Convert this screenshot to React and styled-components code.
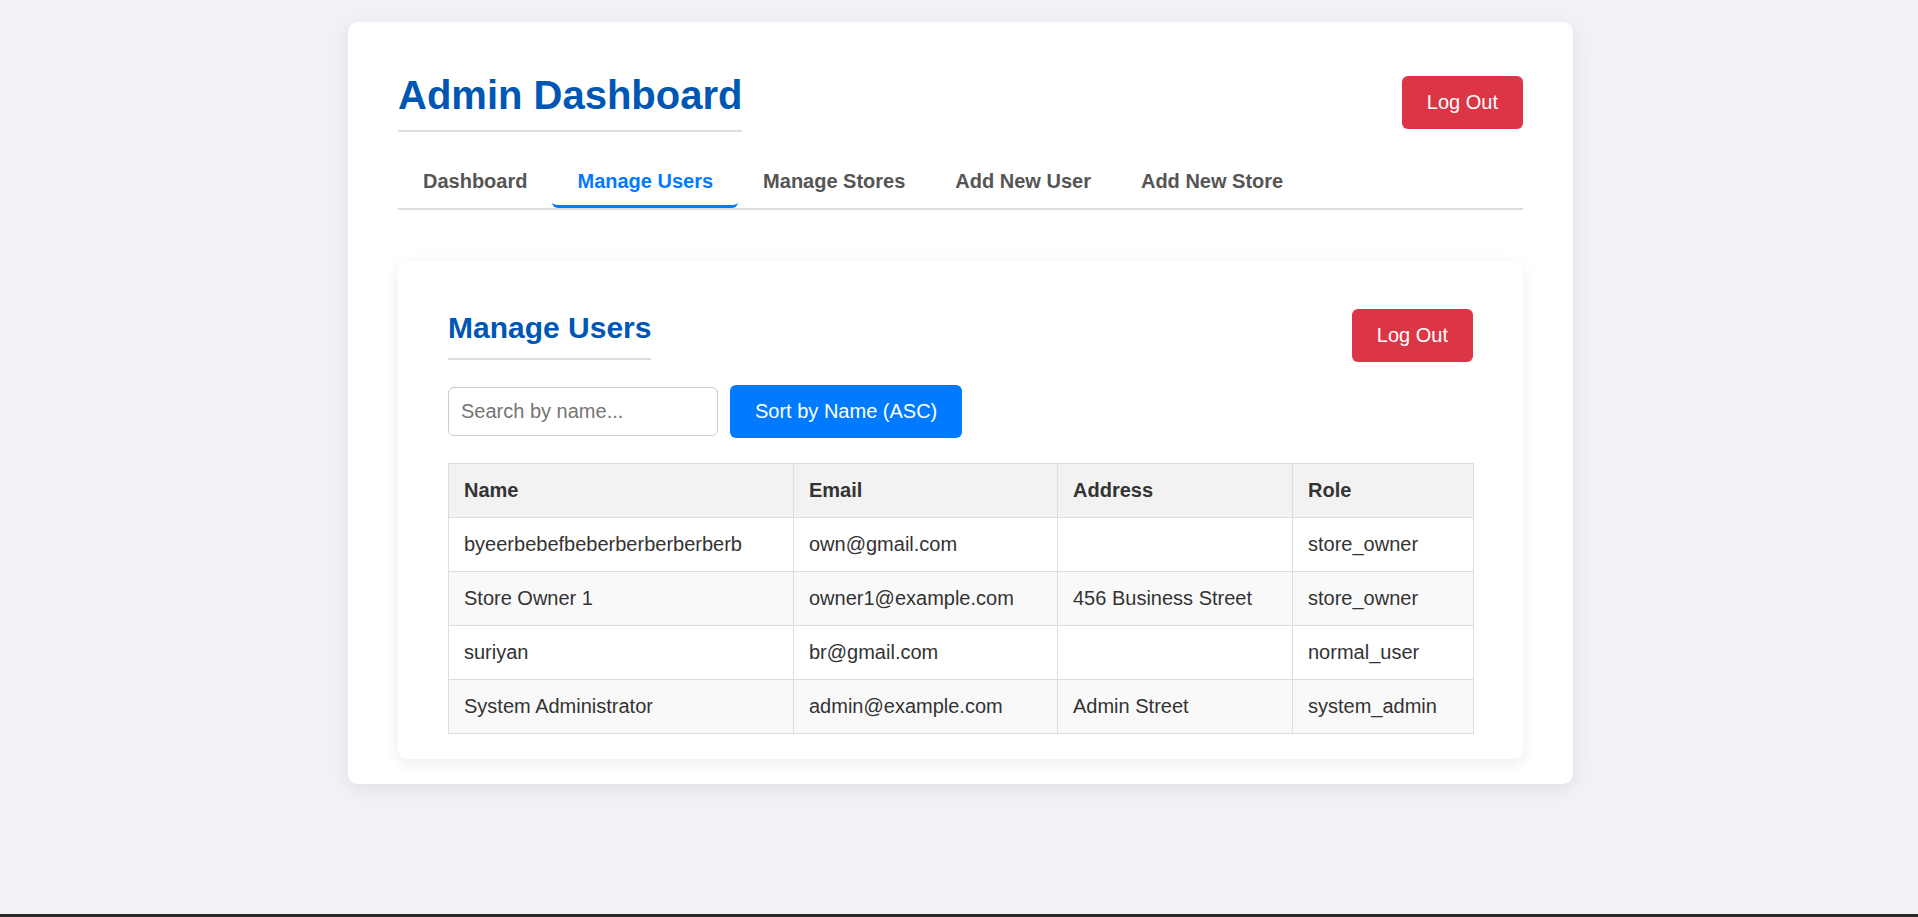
import React from "react";
import styled, { createGlobalStyle } from "styled-components";

const GlobalStyle = createGlobalStyle`
  html { background: #2b2b2b; }
  body {
    margin: 0;
    font-family: "Liberation Sans", Arial, sans-serif;
    color: #333;
  }
  * { box-sizing: border-box; }
`;

const Page = styled.div`
  min-height: calc(100vh - 3px);
  background: #f0f2f5;
  padding: 22px 0 0 3px;
`;

const Container = styled.div`
  width: 1225px;
  margin: 0 auto;
  background: #fff;
  border-radius: 10px;
  box-shadow: 0 4px 20px rgba(0, 0, 0, 0.08);
  padding: 50px 50px 25px;
`;

const Header = styled.header`
  display: flex;
  justify-content: space-between;
  align-items: center;
`;

const Title = styled.h1`
  margin: 0;
  font-size: 40px;
  line-height: 46px;
  font-weight: 700;
  color: #0056b3;
  padding-bottom: 12px;
  border-bottom: 2px solid #ddd;
`;

const LogoutButton = styled.button`
  font-family: inherit;
  font-size: 20px;
  line-height: 23px;
  color: #fff;
  background: #dc3545;
  border: none;
  border-radius: 6px;
  padding: 15px 25px;
  cursor: pointer;
`;

const Nav = styled.nav`
  display: flex;
  margin-top: 26px;
  border-bottom: 2px solid #ddd;
`;

const Tab = styled.button`
  font-family: inherit;
  font-size: 20px;
  line-height: 23px;
  font-weight: 700;
  background: #fff;
  border: none;
  border-bottom: 3px solid ${(p) => (p.$active ? "#007bff" : "transparent")};
  border-radius: 6px;
  color: ${(p) => (p.$active ? "#007bff" : "#555")};
  padding: 12px 25px;
  cursor: pointer;
`;

const Card = styled.section`
  margin-top: 51px;
  background: #fff;
  border-radius: 10px;
  box-shadow: 0 4px 16px rgba(0, 0, 0, 0.08);
  padding: 48px 50px 25px;
`;

const SectionTitle = styled.h2`
  margin: 0;
  font-size: 30px;
  line-height: 34px;
  font-weight: 700;
  color: #0056b3;
  padding-bottom: 13px;
  border-bottom: 2px solid #ddd;
`;

const Controls = styled.div`
  display: flex;
  align-items: center;
  gap: 12px;
  margin-top: 23px;
`;

const SearchInput = styled.input`
  font-family: inherit;
  font-size: 20px;
  line-height: 23px;
  width: 270px;
  padding: 12px;
  border: 1px solid #ccc;
  border-radius: 6px;
  color: #333;
  &::placeholder { color: #757575; }
`;

const SortButton = styled.button`
  font-family: inherit;
  font-size: 20px;
  line-height: 23px;
  color: #fff;
  background: #007bff;
  border: none;
  border-radius: 6px;
  padding: 15px 25px;
  cursor: pointer;
`;

const Table = styled.table`
  width: 100%;
  margin-top: 25px;
  border-collapse: collapse;
  table-layout: fixed;
  font-size: 20px;
  line-height: 23px;
`;

const Th = styled.th`
  text-align: left;
  font-weight: 700;
  color: #333;
  background: #f2f2f2;
  border: 1px solid #ddd;
  padding: 15px;
`;

const Row = styled.tr`
  background: ${(p) => (p.$striped ? "#f9f9f9" : "#fff")};
`;

const Td = styled.td`
  border: 1px solid #ddd;
  padding: 15px;
  color: #333;
  white-space: nowrap;
  overflow: hidden;
`;

const columns = [
  { label: "Name", width: 345 },
  { label: "Email", width: 264 },
  { label: "Address", width: 235 },
  { label: "Role", width: 181 },
];

const users = [
  { name: "byeerbebefbeberberberberberb", email: "own@gmail.com", address: "", role: "store_owner" },
  { name: "Store Owner 1", email: "owner1@example.com", address: "456 Business Street", role: "store_owner" },
  { name: "suriyan", email: "br@gmail.com", address: "", role: "normal_user" },
  { name: "System Administrator", email: "admin@example.com", address: "Admin Street", role: "system_admin" },
];

const tabs = ["Dashboard", "Manage Users", "Manage Stores", "Add New User", "Add New Store"];

export default function App() {
  return (
    <>
      <GlobalStyle />
      <Page>
        <Container>
          <Header>
            <Title>Admin Dashboard</Title>
            <LogoutButton>Log Out</LogoutButton>
          </Header>
          <Nav>
            {tabs.map((t) => (
              <Tab key={t} $active={t === "Manage Users"}>
                {t}
              </Tab>
            ))}
          </Nav>
          <Card>
            <Header>
              <SectionTitle>Manage Users</SectionTitle>
              <LogoutButton>Log Out</LogoutButton>
            </Header>
            <Controls>
              <SearchInput placeholder="Search by name..." />
              <SortButton>Sort by Name (ASC)</SortButton>
            </Controls>
            <Table>
              <colgroup>
                {columns.map((c) => (
                  <col key={c.label} style={{ width: c.width }} />
                ))}
              </colgroup>
              <thead>
                <tr>
                  {columns.map((c) => (
                    <Th key={c.label}>{c.label}</Th>
                  ))}
                </tr>
              </thead>
              <tbody>
                {users.map((u, i) => (
                  <Row key={u.email} $striped={i % 2 === 1}>
                    <Td>{u.name}</Td>
                    <Td>{u.email}</Td>
                    <Td>{u.address}</Td>
                    <Td>{u.role}</Td>
                  </Row>
                ))}
              </tbody>
            </Table>
          </Card>
        </Container>
      </Page>
    </>
  );
}
